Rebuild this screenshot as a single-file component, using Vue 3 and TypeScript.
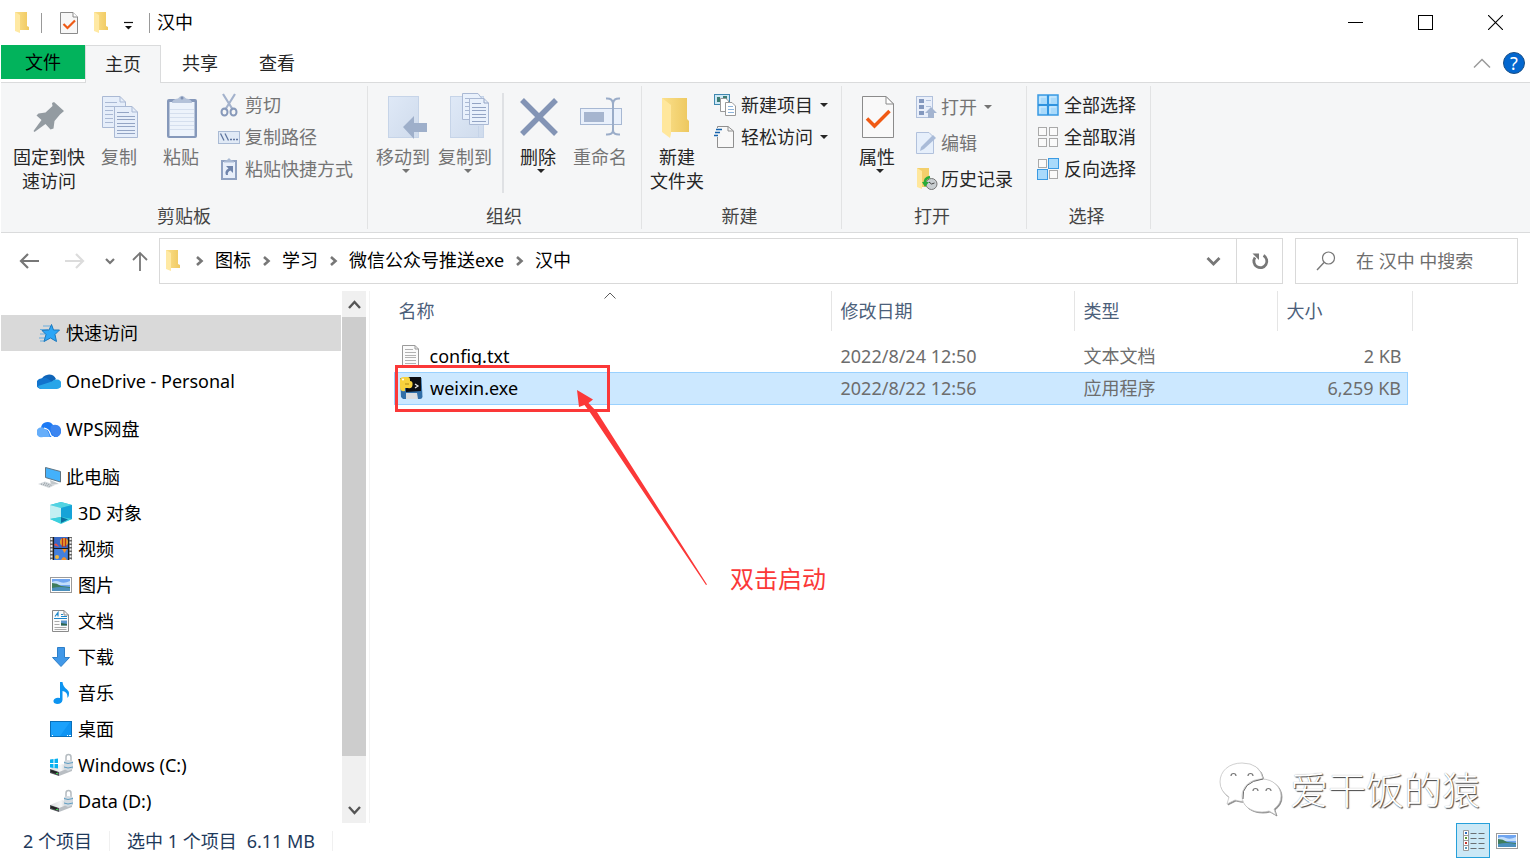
<script setup lang="ts">
import { h, ref } from 'vue'

interface Glyph { w: number; h: number; body: string }

const blueDefs = (id: string) =>
  `<defs><linearGradient id="${id}" x1="0" y1="0" x2="1" y2="1"><stop offset="0" stop-color="#dfe9f7"/><stop offset="1" stop-color="#cfdbec"/></linearGradient></defs>`

const pictureBody = `<rect x="1.500" y="4.500" width="21" height="15" fill="#fff" stroke="#9b9b9b"/>
<rect x="3" y="6" width="18" height="12" fill="#6fa5f0"/><path d="M3 9q4-2 8 0t10-1v4H3z" fill="#c3defa"/>
<path d="M3 10q5 0 9 3l9 1v2H3z" fill="#3f7d5c"/><path d="M3 15q8-2 18 0v3H3z" fill="#4c90bd"/>`

const driveBody = `<defs><linearGradient id="drv" x1="0" y1="0" x2="1" y2="0"><stop offset="0" stop-color="#d6d9dc"/><stop offset=".5" stop-color="#f5f6f7"/><stop offset="1" stop-color="#a4abb1"/></linearGradient></defs>
<path d="M1 16L13 11L23 14V17L9 20L1 19z" fill="url(#drv)"/><path d="M1 16L10 19V23L1 20z" fill="#4e5256"/><path d="M10 19L23 14V18L10 23z" fill="#b9bec3"/>
<path d="M2 18l6 2" stroke="#222" stroke-width="2"/><rect x="7" y="20" width="2" height="1" fill="#35d04a"/>
<path d="M17 8V4q0-2.500 2.500-2.500T22 4v4" fill="none" stroke="#b4bbc0" stroke-width="1.500"/><path d="M15 8l4-1 5 1v8l-5 2-4-2z" fill="#d3dae0"/><path d="M15 9.500l4 1 5-1M15 14l4 1 5-1" fill="none" stroke="#5e9dc2"/>`

const glyphs: Record<string, Glyph> = {
  folder: { w: 16, h: 24, body: `<defs><linearGradient id="fd"><stop offset="0" stop-color="#fbe08c"/><stop offset="1" stop-color="#f0c960"/></linearGradient></defs><path d="M1 1H13V15L15 16V19H1z" fill="url(#fd)"/><path d="M1 1L6 4V22L1 20z" fill="#ffe9a3"/>` },
  checkdoc: { w: 18, h: 24, body: `<path d="M.5 1.500H13L17.500 6V22.500H.5z" fill="#f7f7f7" stroke="#8b8b8b"/><path d="M13 1.500V6H17.500" fill="#fff" stroke="#8b8b8b"/><path d="M3.500 13L7.500 17L15 9.500" fill="none" stroke="#ee5a16" stroke-width="2.200"/>` },
  quick: { w: 9, h: 9, body: `<path d="M0 1.500H9" stroke="#111" stroke-width="1.200"/><path d="M1 5H8L4.500 8.500z" fill="#111"/>` },
  min: { w: 15, h: 15, body: `<path d="M0 7.500H15" stroke="#000"/>` },
  max: { w: 15, h: 15, body: `<rect x=".5" y=".5" width="14" height="14" fill="none" stroke="#000"/>` },
  close: { w: 15, h: 15, body: `<path d="M0 0L15 15M15 0L0 15" stroke="#000" stroke-width="1.100"/>` },
  collapse: { w: 18, h: 12, body: `<path d="M1 10.500L9 2.500L17 10.500" fill="none" stroke="#9a9a9a" stroke-width="1.500"/>` },
  drop: { w: 8, h: 5, body: `<path d="M0 0H8L4 4z" fill="currentColor"/>` },
  pin: { w: 48, h: 48, body: `<path d="M29 9L39 18L35 21.500L29.500 28L28.500 35.500L25.500 36.500L20.500 31L9.500 39L8.500 38L16.500 27L11.500 22.500L13.500 20.500L20.500 19.500L27.500 13L27 10z" fill="#939ba1"/>` },
  copy: { w: 48, h: 48, body: `<g fill="#e6eefa" stroke="#aab9d4"><path d="M7.500 3.500H25L30.500 9V34.500H7.500z"/><path d="M25 3.500V9H30.500M10 9.500h12M10 13.500h17M10 17.500h8M10 21.500h8M10 25.500h8M10 29.500h8" fill="none"/><path d="M19.500 13.500H37L42.500 19V44.500H19.500z"/><path d="M37 13.500V19H42.500" fill="none"/><path d="M22 19.500h12M22 23.500h18M22 26.500h18M22 30.500h18M22 33.500h18M22 37.500h18M22 40.500h18" fill="none" stroke="#93a4c4"/></g>` },
  paste: { w: 48, h: 48, body: `<rect x="10" y="6" width="30" height="39" rx="2" fill="#8598ba"/><rect x="12.500" y="9" width="25" height="34" fill="#edf3fb"/><path d="M13 16.500h24M13 20.500h24M13 24.500h24M13 28.500h24M13 32.500h24M13 36.500h24" stroke="#d5dfee"/><path d="M15 10q0-4 6-4.500Q25 0 29 5.500q6 .5 6 4.500z" fill="#b4c2d9"/><circle cx="25" cy="5" r="1.500" fill="#7f91b2"/>` },
  cut: { w: 22, h: 24, body: `<path d="M5 1L15 17M17 1L7 17" stroke="#a3b2cc" stroke-width="2.200"/><ellipse cx="6.500" cy="19" rx="3" ry="3.500" fill="none" stroke="#8799ba" stroke-width="2"/><ellipse cx="15.500" cy="19" rx="3" ry="3.500" fill="none" stroke="#8799ba" stroke-width="2"/>` },
  path: { w: 22, h: 24, body: `<rect x=".5" y="6.500" width="21" height="12" fill="#e1eaf6" stroke="#a9bad4"/><path d="M2.500 8.500l3.500 7M7 8.500l3.500 7" stroke="#5f759f" stroke-width="1.300"/><path d="M12 14.500h2M15 14.500h2M18 14.500h2" stroke="#5f759f" stroke-width="1.500"/>` },
  shortcut: { w: 22, h: 24, body: `<rect x="4" y="4" width="14" height="18" fill="#e8effa" stroke="#8fa1c1" stroke-width="2"/><path d="M6 5.500V4l3-1 2-2 2 2 3 1v1.500z" fill="#a9b9d3"/><path d="M8 9h7v7l-2.500-2.500Q9 15 10 18H8q-2-4 2.500-6.500z" fill="#6f84ab"/>` },
  moveto: { w: 48, h: 48, body: blueDefs('bm') + `<rect x="9.500" y="3.500" width="30" height="41" fill="url(#bm)" stroke="#c6d4e8"/><path d="M24 34L35 23V30H48V39H35V46z" fill="#9eafca"/>` },
  copyto: { w: 48, h: 48, body: blueDefs('bc') + `<rect x="9.500" y="3.500" width="33" height="41" fill="url(#bc)" stroke="#c6d4e8"/><path d="M37.500 33V44" stroke="#c6d4e8"/><g fill="#e9f1fc" stroke="#aab9d4"><path d="M21.500 .5H37L40.500 5V26.500H21.500z"/><path d="M24 5.500h10M24 9.500h5M24 13.500h5M24 17.500h5M24 21.500h5" fill="none"/><path d="M28.500 5.500H43L47.500 10V31.500H28.500z"/><path d="M43 5.500V10H47.500M31 10.500h9M31 14.500h14M31 17.500h14M31 21.500h14M31 24.500h14M31 28.500h14" fill="none" stroke="#93a4c4"/></g>` },
  remove: { w: 48, h: 48, body: `<path d="M8 7L42 41M42 7L8 41" stroke="#8394b5" stroke-width="5.500"/>` },
  rename: { w: 48, h: 48, body: `<rect x="4.500" y="15.500" width="41" height="16" fill="#e9f0fb" stroke="#a7b8d3"/><rect x="8" y="19" width="20" height="10" fill="#a6b5cf"/><path d="M30 5.500Q37 5 37 11V37Q37 42 30 41.500M44 5.500Q37 5 37 11M37 37Q37 42 44 41.500" fill="none" stroke="#9aacc8" stroke-width="2"/>` },
  bigfolder: { w: 48, h: 48, body: `<defs><linearGradient id="fb"><stop offset="0" stop-color="#fbe08c"/><stop offset="1" stop-color="#edc85f"/></linearGradient></defs><path d="M9 5H34V26L36 28V39H9z" fill="url(#fb)"/><path d="M9 5L18 12V41L17 45L9 39z" fill="#ffe79c"/>` },
  props: { w: 48, h: 48, body: `<path d="M9.500 3.500H33L40.500 11V44.500H9.500z" fill="#f9f9f9" stroke="#8b8b8b"/><path d="M33 3.500V11H40.500z" fill="#fff" stroke="#8b8b8b"/><path d="M14 25.500L21.500 33L36.500 18" fill="none" stroke="#f05a14" stroke-width="3.500"/>` },
  newitem: { w: 22, h: 24, body: `<rect x=".5" y="1.500" width="15" height="10" fill="#cde8f6" stroke="#3f88b0"/><path d="M3 4h3v5H3zM9 3h4v4H9z" fill="#3d7d73"/><path d="M6.500 5.500H12L14.500 8V18.500H6.500z" fill="#fff" stroke="#999"/><path d="M11.500 9.500H18L21.500 13V22.500H11.500z" fill="#fff" stroke="#999"/><path d="M14 13.500h5M14 16.500h6M14 19.500h6" stroke="#8db3da"/>` },
  easy: { w: 22, h: 24, body: `<path d="M3.500 1.500H14L19.500 6V22.500H3.500z" fill="#f8f8f8" stroke="#8f8f8f"/><path d="M14 1.500V6H19.500" fill="none" stroke="#8f8f8f"/><rect x="0" y="3" width="7" height="9" fill="#f5f6f7"/><path d="M2 4.500h6M1 7.500h5M0 10.500h4" stroke="#1763ac" stroke-width="1.300"/>` },
  open: { w: 22, h: 24, body: `<rect x=".5" y="1.500" width="16" height="21" fill="#e9effa" stroke="#b1c1dc"/><path d="M3 4h5v4H3zM3 10h5v4H3zM3 16h5v4H3z" fill="#8398be"/><path d="M10 5.500h5M10 11.500h5" stroke="#b1c1dc"/><path d="M15 12L21 18H18V23H12V18H9z" fill="#a3b4d0"/>` },
  edit: { w: 22, h: 24, body: `<path d="M.5 1.500H13L17.500 6V22.500H.5z" fill="#e6effb" stroke="#b1c1dc"/><path d="M4 20L5 16L17 4L20 7L8 18z" fill="#a9bbd8"/>` },
  history: { w: 22, h: 24, body: `<path d="M1 1H13V20H1z" fill="#f3cf6b"/><path d="M1 1L6 4V22L1 20z" fill="#ffe79c"/><circle cx="15.500" cy="17" r="5.500" fill="#c9ced1" stroke="#777"/><path d="M13 15l2.500 2 3-1" fill="none" stroke="#444"/><path d="M14 10Q8 11 9 17" fill="none" stroke="#28ab3a" stroke-width="2.500"/><path d="M6 15h7l-4 5z" fill="#28ab3a"/>` },
  selall: { w: 22, h: 24, body: `<rect x="1" y="2" width="20" height="20" fill="#a9dafb" stroke="#3a9ae3" stroke-width="1.500"/><path d="M11 2V22M1 12H21" stroke="#2f93df" stroke-width="2"/><path d="M3 10V4h6M13 10V4h6M3 20v-6h6M13 20v-6h6" fill="none" stroke="#d5eefe"/>` },
  selnone: { w: 22, h: 24, body: `<g fill="#fafafa" stroke="#a9a9a9"><rect x="1.500" y="2.500" width="8" height="8"/><rect x="12.500" y="2.500" width="8" height="8"/><rect x="1.500" y="13.500" width="8" height="8"/><rect x="12.500" y="13.500" width="8" height="8"/></g>` },
  selinv: { w: 22, h: 24, body: `<g fill="#fafafa" stroke="#a9a9a9"><rect x="1.500" y="2.500" width="8" height="8"/><rect x="12.500" y="13.500" width="8" height="8"/></g><g fill="#a9dafb" stroke="#3a9ae3"><rect x="11.500" y="1.500" width="10" height="10"/><rect x=".5" y="12.500" width="10" height="10"/></g>` },
  back: { w: 20, h: 18, body: `<path d="M20 9H2M9 2L2 9L9 16" fill="none" stroke="#777" stroke-width="2.200"/>` },
  forward: { w: 20, h: 18, body: `<path d="M0 9H18M11 2L18 9L11 16" fill="none" stroke="#dcdcdc" stroke-width="2.200"/>` },
  recent: { w: 10, h: 8, body: `<path d="M1 2L5 6L9 2" fill="none" stroke="#777" stroke-width="2.200"/>` },
  up: { w: 16, h: 20, body: `<path d="M8 20V2M1 9L8 2L15 9" fill="none" stroke="#777" stroke-width="1.800"/>` },
  crumb: { w: 9, h: 12, body: `<path d="M2 2L6.500 6L2 10" fill="none" stroke="#777" stroke-width="2.600"/>` },
  expand: { w: 15, h: 12, body: `<path d="M1.500 3L7.500 9L13.500 3" fill="none" stroke="#777" stroke-width="2.800"/>` },
  refresh: { w: 18, h: 18, body: `<path d="M12.500 3.500A6.500 6.500 0 1 1 4 5.500" fill="none" stroke="#777" stroke-width="2.800"/><path d="M1.500 1.500H8V8z" fill="#777"/>` },
  search: { w: 20, h: 20, body: `<circle cx="12.500" cy="7" r="6" fill="none" stroke="#777" stroke-width="1.200"/><path d="M8 11.500L1 19" stroke="#777" stroke-width="1.400"/>` },
  star: { w: 24, h: 24, body: `<path d="M6 5h7M3 8.500h8M3 13h6M2 17h6M3 20h4" stroke="#6aaede" stroke-width="1.200"/><path d="M14.500 3.500L16.500 9H22.500L18 13.500L19.500 20.500L13.500 17L7 20.500L9 13.500L5 9.500L12 9z" fill="#2ba6f6" stroke="#1c78bd"/>` },
  onedrive: { w: 24, h: 24, body: `<path d="M4 12A8 8 0 0 1 19 10L13 15z" fill="#0f64b8"/><path d="M5 20A5 5 0 0 1 4 9.500Q8 8 11 10L17 14L8 20z" fill="#1173cd"/><path d="M15 12.500Q17 10 20 10.500A4.700 4.700 0 0 1 20 20H5Q2 20 1 17z" fill="#28a5e9"/>` },
  wps: { w: 24, h: 24, body: `<path d="M4 11A6.500 6.500 0 0 1 16 8Q15 13 21 20H9z" fill="#1b7af5"/><path d="M16 8A6 6 0 0 1 20 20H18Q12 15 14 9z" fill="#3c85f0"/><path d="M6 20A5 5 0 1 1 7 11Q11 12 13 20z" fill="#66aefa"/><path d="M7 11Q12 12 13 16T17 20" fill="none" stroke="#fff" stroke-width="1.200"/>` },
  pc: { w: 24, h: 24, body: `<path d="M8.500 2.500L23.500 6.500V17L8.500 12.500z" fill="#44b1fa" stroke="#5f7482"/><path d="M13 15L18 17L22 19L14 20z" fill="#c1c7cb"/><path d="M1 19L8 16.500L18 20L12 23z" fill="#d3d8dc"/><path d="M4 19l9 2.500M7 18l8 2.500" stroke="#8f989e" stroke-dasharray="1 1"/>` },
  cube: { w: 24, h: 24, body: `<path d="M12 1L23 4V18L12 22L1 18V4z" fill="#2cc0d8"/><path d="M1 4L12 1L23 4L12 7z" fill="#52d3e2"/><path d="M1 4L12 7V16L1 18z" fill="#c3f0f3"/><path d="M12 7L23 4V18L12 16z" fill="#16a3d8"/><path d="M12 16L23 18L12 23L1 18z" fill="#3bd0de"/><path d="M12 16L19 18.500L12 22z" fill="#0a6fa0"/>` },
  video: { w: 24, h: 24, body: `<rect x="1" y="0" width="22" height="23" fill="#666"/><path d="M2.500 1V23M21.500 1V23" stroke="#f2f2f2" stroke-width="2" stroke-dasharray="2 1.500"/><rect x="4.500" y="0" width="15" height="11" fill="#3969c5"/><rect x="4.500" y="12" width="15" height="11" fill="#4480dc"/><path d="M4.500 11V0M19.500 0V23M4.500 11V23M4 11.500H20" stroke="#1b1b1b" stroke-width="1.200"/><circle cx="15" cy="5" r="4" fill="#e4a32b"/><path d="M13.500 1v9M16.500 1v9" stroke="#bd3020" stroke-width="1.300"/><path d="M5 8q2-4 5 2z" fill="#f04f42"/><path d="M13 12h5l-2.500 4zM12 23q3-6 6 0z" fill="#f1912e"/><circle cx="8" cy="20" r="2" fill="#f5b93c"/>` },
  picture: { w: 24, h: 24, body: pictureBody },
  doc: { w: 24, h: 24, body: `<path d="M3.500 1.500H15L19.500 6V22.500H3.500z" fill="#fbfbfb" stroke="#8b8b8b"/><path d="M15 1.500V6H19.500" fill="none" stroke="#8b8b8b"/><path d="M6 7.500l3-4v4M12 5.500h2M12 7.500h6M5 9.500h13" fill="none" stroke="#1d86c9" stroke-width="1.200"/><path d="M5.500 12.500h5M5.500 15.500h5M5.500 18.500h12M5.500 20.500h12" stroke="#aaa"/><rect x="12" y="11.500" width="6" height="5" fill="#5a95cc"/><path d="M12 14l6 1v1.500h-6z" fill="#2f664c"/>` },
  download: { w: 24, h: 24, body: `<path d="M8.500 2.500H15.500V12.500H20.500L12 21.500L3.500 12.500H8.500z" fill="#4198e8" stroke="#2d7fc9"/>` },
  music: { w: 24, h: 24, body: `<path d="M11 1h2.500Q14 6 18 8.500Q22 12 18.500 17Q19 11 13.500 10V19Q13 23 8 23Q4 22.500 4.500 19.500Q6 16 11 17z" fill="#0d94f0"/>` },
  desktop: { w: 24, h: 24, body: `<rect x="1.500" y="4.500" width="21" height="15" fill="#1ba1fb" stroke="#0a6fb9"/><path d="M11 19L21 5H22V19z" fill="#0e94f3"/><path d="M3 18.500h1M18 18.500h1M20 18.500h2" stroke="#fff"/>` },
  winDrive: { w: 24, h: 24, body: driveBody + `<path d="M1 6.500L4.500 6V10H1zM5.500 6L9 5.500V10H5.500zM1 11H4.500V15L1 14.500zM5.500 11H9V15.500L5.500 15z" fill="#06b0f0"/>` },
  drive: { w: 24, h: 24, body: driveBody },
  text: { w: 24, h: 24, body: `<path d="M3.500 1.500H16L19.500 5V22.500H3.500z" fill="#fbfbfb" stroke="#9a9a9a"/><path d="M16 1.500V5H19.500" fill="none" stroke="#9a9a9a"/><path d="M6 5.500h8M6 8.500h11M6 11.500h11M6 13.500h11M6 16.500h11M6 19.500h11" stroke="#b2b2b2"/>` },
  exe: { w: 24, h: 24, body: `<path d="M1 2H22.500L23.500 21Q23 23 21 23H4L2 21z" fill="#316fa8"/><path d="M6 1H22V15L7 16z" fill="#0c0e13"/><path d="M16 8l3 2-3 2" fill="none" stroke="#e5e5e5" stroke-width="1.300"/><path d="M1 4Q1 1 5 1H9Q11 1 11 4V5Q14 5 13.500 9T9 12H6V15Q1 16 1 11z" fill="#f7d23d"/><circle cx="4" cy="3.500" r="1" fill="#fff"/><path d="M6 8h4" stroke="#b28c16"/><path d="M7 17H18L19 23H7z" fill="#d9dcdf"/>` },
  sort: { w: 12, h: 7, body: `<path d="M.5 6.500L6 1L11.500 6.500" fill="none" stroke="#5c5c5c"/>` },
  scrollUp: { w: 13, h: 9, body: `<path d="M1 8L6.500 2L12 8" fill="none" stroke="#555" stroke-width="2.400"/>` },
  scrollDown: { w: 13, h: 9, body: `<path d="M1 1L6.500 7L12 1" fill="none" stroke="#555" stroke-width="2.400"/>` },
  details: { w: 24, h: 24, body: `<path d="M2.500 1.500H7.500V21.500H2.500zM2.500 6.500H7.500M2.500 11.500H7.500M2.500 16.500H7.500" fill="#fff" stroke="#999"/><path d="M9.500 4.500h6M17.500 4.500h6M9.500 9.500h6M17.500 9.500h6M9.500 14.500h6M17.500 14.500h6M9.500 19.500h6M17.500 19.500h6" stroke="#6a6f73"/><rect x="4" y="3" width="2" height="2" fill="#2d6fc0"/><rect x="4" y="8" width="2" height="2" fill="#5c9a36"/><rect x="4" y="13" width="2" height="2" fill="#c8372d"/><rect x="4" y="18" width="2" height="2" fill="#5a9dbd"/>` },
  bubbles: { w: 64, h: 56, body: `<g fill="#fff" stroke="#c4c4c4" stroke-width=".8"><path d="M23 2C10 2 1 10 1 21q0 9 9 15l-2 7 8-4q6 2 10 1Q21 20 44 18Q41 2 23 2z"/><path d="M43 18C31 18 23 26 23 35C23 45 32 51 43 51q4 0 7-1l7 4-2-6q7-5 7-13C62 26 54 18 43 18z"/></g><path d="M24 38Q22 21 44 18" fill="none" stroke="#666"/><g fill="none" stroke="#777" stroke-width="1.200"><path d="M12 15a2.500 2.500 0 1 1 5 0M29 15a2.500 2.500 0 1 1 5 0M34 30a2.500 2.500 0 1 1 5 0M47 30a2.500 2.500 0 1 1 5 0"/></g>` },
}

const Icon = (props: { name: string }) => {
  const g = glyphs[props.name]
  return h('svg', {
    viewBox: `0 0 ${g.w} ${g.h}`, width: g.w, height: g.h,
    'aria-hidden': 'true', innerHTML: g.body,
  })
}
Icon.props = ['name']

interface Cmd { icon: string; lines: string[]; off?: boolean; drop?: boolean; sep?: boolean }
interface Group { name: string; cls: string; big: Cmd[]; small: Cmd[] }

const groups: Group[] = [
  { name: '剪贴板', cls: 'g-clip',
    big: [
      { icon: 'pin', lines: ['固定到快', '速访问'] },
      { icon: 'copy', lines: ['复制'], off: true },
      { icon: 'paste', lines: ['粘贴'], off: true },
    ],
    small: [
      { icon: 'cut', lines: ['剪切'], off: true },
      { icon: 'path', lines: ['复制路径'], off: true },
      { icon: 'shortcut', lines: ['粘贴快捷方式'], off: true },
    ] },
  { name: '组织', cls: 'g-org',
    big: [
      { icon: 'moveto', lines: ['移动到'], off: true, drop: true },
      { icon: 'copyto', lines: ['复制到'], off: true, drop: true },
      { icon: 'remove', lines: ['删除'], drop: true, sep: true },
      { icon: 'rename', lines: ['重命名'], off: true },
    ],
    small: [] },
  { name: '新建', cls: 'g-new',
    big: [{ icon: 'bigfolder', lines: ['新建', '文件夹'] }],
    small: [
      { icon: 'newitem', lines: ['新建项目'], drop: true },
      { icon: 'easy', lines: ['轻松访问'], drop: true },
    ] },
  { name: '打开', cls: 'g-open',
    big: [{ icon: 'props', lines: ['属性'], drop: true }],
    small: [
      { icon: 'open', lines: ['打开'], off: true, drop: true },
      { icon: 'edit', lines: ['编辑'], off: true },
      { icon: 'history', lines: ['历史记录'] },
    ] },
  { name: '选择', cls: 'g-select',
    big: [],
    small: [
      { icon: 'selall', lines: ['全部选择'] },
      { icon: 'selnone', lines: ['全部取消'] },
      { icon: 'selinv', lines: ['反向选择'] },
    ] },
]

const tabs = ['主页', '共享', '查看']
const crumbs = ['图标', '学习', '微信公众号推送exe', '汉中']
const query = ref('')

const tree = [
  { icon: 'star', label: '快速访问', root: true, active: true },
  { icon: 'onedrive', label: 'OneDrive - Personal', root: true },
  { icon: 'wps', label: 'WPS网盘', root: true },
  { icon: 'pc', label: '此电脑', root: true },
  { icon: 'cube', label: '3D 对象' },
  { icon: 'video', label: '视频' },
  { icon: 'picture', label: '图片' },
  { icon: 'doc', label: '文档' },
  { icon: 'download', label: '下载' },
  { icon: 'music', label: '音乐' },
  { icon: 'desktop', label: '桌面' },
  { icon: 'winDrive', label: 'Windows (C:)' },
  { icon: 'drive', label: 'Data (D:)' },
]

const files = [
  { icon: 'text', name: 'config.txt', date: '2022/8/24 12:50', kind: '文本文档', size: '2 KB', on: false },
  { icon: 'exe', name: 'weixin.exe', date: '2022/8/22 12:56', kind: '应用程序', size: '6,259 KB', on: true },
]
</script>

<template>
  <div class="window">
    <header class="titlebar">
      <Icon name="folder" class="app-icon" />
      <span class="bar"></span>
      <button class="plain qa" aria-label="属性"><Icon name="checkdoc" /></button>
      <button class="plain qa" aria-label="新建文件夹"><Icon name="folder" /></button>
      <button class="plain qa-menu" aria-label="自定义快速访问工具栏"><Icon name="quick" /></button>
      <span class="bar"></span>
      <h1>汉中</h1>
      <div class="controls">
        <button class="plain" aria-label="最小化"><Icon name="min" /></button>
        <button class="plain" aria-label="最大化"><Icon name="max" /></button>
        <button class="plain" aria-label="关闭"><Icon name="close" /></button>
      </div>
    </header>

    <nav class="tabs">
      <button class="plain file-tab">文件</button>
      <button v-for="(t, i) in tabs" :key="t" class="plain tab" :class="{ current: i === 0 }">{{ t }}</button>
      <div class="tab-tools">
        <button class="plain" aria-label="折叠功能区"><Icon name="collapse" /></button>
        <button class="plain help" aria-label="帮助">?</button>
      </div>
    </nav>

    <div class="ribbon">
      <section v-for="g in groups" :key="g.name" class="group" :class="g.cls">
        <div class="cmds">
          <template v-for="c in g.big" :key="c.icon">
            <span v-if="c.sep" class="cmd-sep"></span>
            <button class="plain big" :class="{ off: c.off }">
              <Icon :name="c.icon" />
              <span v-for="l in c.lines" :key="l" class="line">{{ l }}</span>
              <Icon v-if="c.drop" name="drop" class="big-drop" />
            </button>
          </template>
          <div v-if="g.small.length" class="stack">
            <button v-for="c in g.small" :key="c.icon" class="plain small" :class="{ off: c.off }">
              <Icon :name="c.icon" /><span>{{ c.lines[0] }}</span><Icon v-if="c.drop" name="drop" class="side-drop" />
            </button>
          </div>
        </div>
        <h2>{{ g.name }}</h2>
      </section>
    </div>

    <div class="navrow">
      <button class="plain nav-wide" aria-label="后退"><Icon name="back" /></button>
      <button class="plain nav-wide" aria-label="前进"><Icon name="forward" /></button>
      <button class="plain nav-slim" aria-label="最近位置"><Icon name="recent" /></button>
      <button class="plain nav-up" aria-label="上移"><Icon name="up" /></button>
      <div class="address">
        <Icon name="folder" class="addr-icon" />
        <template v-for="c in crumbs" :key="c">
          <Icon name="crumb" class="crumb-sep" />
          <button class="plain crumb">{{ c }}</button>
        </template>
        <button class="plain addr-expand" aria-label="展开"><Icon name="expand" /></button>
        <button class="plain addr-refresh" aria-label="刷新"><Icon name="refresh" /></button>
      </div>
      <label class="search">
        <Icon name="search" />
        <input v-model="query" type="search" placeholder="在 汉中 中搜索" aria-label="在 汉中 中搜索" />
      </label>
    </div>

    <div class="body">
      <aside class="side">
        <ul class="tree">
          <li v-for="n in tree" :key="n.label" :class="{ root: n.root }">
            <a href="#" :class="{ active: n.active }"><Icon :name="n.icon" /><span>{{ n.label }}</span></a>
          </li>
        </ul>
        <div class="scroll">
          <button class="plain" aria-label="向上滚动"><Icon name="scrollUp" /></button>
          <div class="track"><div class="thumb"></div></div>
          <button class="plain" aria-label="向下滚动"><Icon name="scrollDown" /></button>
        </div>
      </aside>

      <main class="files">
        <table>
          <colgroup><col class="c-name" /><col class="c-date" /><col class="c-kind" /><col class="c-size" /></colgroup>
          <thead>
            <tr>
              <th scope="col"><div>名称<Icon name="sort" class="sort" /></div></th>
              <th scope="col"><div>修改日期</div></th>
              <th scope="col"><div>类型</div></th>
              <th scope="col"><div>大小</div></th>
            </tr>
          </thead>
          <tbody>
            <tr v-for="f in files" :key="f.name" :class="{ on: f.on }">
              <td class="name"><div><Icon :name="f.icon" />{{ f.name }}</div></td>
              <td>{{ f.date }}</td>
              <td>{{ f.kind }}</td>
              <td class="size">{{ f.size }}</td>
            </tr>
          </tbody>
        </table>

        <div class="mark-box"></div>
        <svg class="mark-arrow" viewBox="0 0 130 196" width="130" height="196" aria-hidden="true">
          <path d="M0 0L16 9.500L11.500 13L20 22L130 194.500L129 195L12 21L7.500 15L2 17z" fill="#fb3838" />
        </svg>
        <p class="mark-text">双击启动</p>
        <div class="brand"><Icon name="bubbles" /><span>爱干饭的猿</span></div>
      </main>
    </div>

    <footer class="status">
      <span class="cell">2 个项目</span>
      <span class="cell"><span>选中 1 个项目</span><span>6.11 MB</span></span>
      <div class="views">
        <button class="plain view on" aria-label="详细信息"><Icon name="details" /></button>
        <button class="plain view" aria-label="大图标"><Icon name="picture" /></button>
      </div>
    </footer>
  </div>
</template>

<style>
html, body { background: #fff; }
</style>

<style scoped>
.window {
  display: flex; flex-direction: column; box-sizing: border-box; min-height: 100vh;
  padding: 0 1px; background: #fff; color: #000; overflow: hidden;
  font: 18px/24px "Noto Sans", "Noto Sans CJK SC", sans-serif;
}
.window *, .window *::after { box-sizing: border-box; }
svg { display: block; flex: none; }
.plain {
  display: flex; align-items: center; justify-content: center;
  margin: 0; padding: 0; border: 0; background: none; color: inherit; font: inherit; white-space: nowrap;
}
h1, h2, p, ul { margin: 0; padding: 0; font: inherit; }

.titlebar { display: flex; align-items: center; height: 45px; padding-left: 13px; }
.bar { width: 1px; height: 20px; background: #999; }
.app-icon { margin-right: 11px; }
.qa { margin-left: 15px; }
.bar + .qa { margin-left: 18px; }
.qa + .qa-menu { margin: 6px 16px 0 15px; }
h1 { margin-left: 7px; padding-bottom: 2px; }
.controls { display: flex; align-self: stretch; margin-left: auto; }
.controls .plain { width: 70px; }

.tabs { display: flex; align-items: flex-start; height: 37px; }
.file-tab { width: 84px; height: 34px; background: #02b35c; }
.tab { height: 37px; padding: 0 20px 2px; margin-left: 1px; color: #262626; }
.tab.current {
  position: relative; z-index: 1; height: 38px; margin-left: 0; padding: 0 19px 2px;
  border: 1px solid #dadbdc; border-bottom: 0; background: #f5f6f7;
}
.tab-tools { display: flex; align-items: center; gap: 12px; height: 36px; margin-left: auto; padding-right: 5px; }
.help {
  width: 22px; height: 22px; border-radius: 50%; border: 1px solid #1a4f86;
  background: #0367cf; color: #fff; line-height: 20px;
}

.ribbon {
  display: flex; height: 151px; border-top: 1px solid #dadbdc; border-bottom: 1px solid #dadbdc;
  background: #f5f6f7; color: #262626;
}
.group { position: relative; display: flex; flex-direction: column; padding: 6px 4px 0; }
.group::after { content: ""; position: absolute; top: 3px; right: 0; bottom: 3px; width: 1px; background: #e2e3e4; }
.g-clip { padding: 6px 15px 0 9px; }
.g-org { padding-right: 11px; }
.g-new { padding-right: 14px; }
.g-open { padding-right: 14px; }
.g-select { padding: 6px 15px 0 10px; }
.cmds { display: flex; height: 115px; }
h2 { padding-left: 5px; text-align: center; color: #444; }
.g-select h2 { padding: 0; }
.big { flex-direction: column; justify-content: flex-start; width: 62px; padding-top: 4px; }
.big > svg:first-child { margin-bottom: 4px; }
.g-clip .big:first-child { width: 78px; }
.big-drop { margin-left: 5px; }
.off { color: #747474; }
.cmd-sep { width: 2px; height: 100px; margin: 4px 3px 0 6px; background: #dfe1e4; }
.stack { display: flex; flex-direction: column; align-items: flex-start; margin-left: 6px; }
.g-select .stack { margin-left: 0; }
.small { height: 32px; gap: 5px; }
.g-open .small { height: 36px; gap: 3px; }
.g-open .stack { margin-left: 8px; }
.side-drop { margin-left: 2px; }
.g-open .side-drop { margin-left: 4px; }

.navrow { display: flex; align-items: center; padding: 5px 12px 7px 5px; }
.nav-wide { width: 46px; height: 46px; }
.nav-slim { width: 24px; height: 46px; }
.nav-up { width: 37px; height: 46px; padding-right: 2px; }
.address { display: flex; align-items: center; flex: 1; height: 46px; border: 1px solid #d9d9d9; }
.addr-icon { margin: 0 3px 0 5px; }
.crumb-sep { margin: 0 11px; }
.crumb { padding-bottom: 2px; }
.addr-expand { width: 46px; height: 44px; margin-left: auto; }
.addr-refresh { width: 46px; height: 44px; border-left: 1px solid #d9d9d9; }
.search {
  display: flex; align-items: center; gap: 20px; width: 223px; height: 46px;
  margin-left: 12px; padding-left: 20px; border: 1px solid #d9d9d9;
}
.search input {
  flex: 1; min-width: 0; padding: 0; border: 0; outline: 0; background: none; font: inherit; color: #333;
}
.search input::placeholder { color: #6d6d6d; opacity: 1; }

.body { display: flex; flex: 1; }
.side { display: flex; width: 369px; padding-right: 3px; border-right: 1px solid #f3f3f3; }
.tree { flex: 1; padding: 24px 1px 4px 0; list-style: none; }
.tree a {
  display: flex; align-items: center; gap: 5px; height: 36px; padding-left: 48px; color: #000; text-decoration: none;
}
.tree .root a { padding-left: 36px; }
.tree .root + .root { margin-top: 12px; }
.tree .active { background: #d9d9d9; }
.scroll { display: flex; flex-direction: column; width: 24px; background: #f0f0f0; }
.scroll .plain { height: 26px; }
.track { flex: 1; }
.thumb { height: 91.5%; background: #cdcdcd; }

.files { position: relative; flex: 1; padding-left: 24px; }
table { width: 1013px; table-layout: fixed; border-collapse: collapse; }
.c-name { width: 437px; }
.c-date { width: 243px; }
.c-kind { width: 203px; }
.c-size { width: 130px; }
th { height: 49px; padding: 0; vertical-align: top; text-align: left; font-weight: 400; color: #4c607a; }
th div { position: relative; height: 40px; padding-left: 9px; border-right: 1px solid #e5e5e5; line-height: 40px; }
th:first-child div { padding-left: 4px; }
th:last-child div { margin-right: -5px; }
.sort { position: absolute; top: 1px; left: 50%; margin-left: -9px; }
td { height: 32px; padding: 0 0 0 9px; color: #6d6d6d; }
td.name { padding-left: 4px; color: #000; }
td.name div { display: flex; align-items: center; gap: 7px; }
td.size { padding: 0 6px 0 0; text-align: right; }
.on td { border: solid #99d1ff; border-width: 1px 0; background: #cce8ff; }
.on td:first-child { border-left-width: 1px; }
.on td:last-child { border-right-width: 1px; }

.mark-box { position: absolute; left: 25px; top: 74px; width: 215px; height: 47px; border: 3px solid #fb3838; }
.mark-arrow { position: absolute; left: 207px; top: 99px; }
.mark-text { position: absolute; left: 360px; top: 272px; font-size: 24px; line-height: 32px; color: #fb3838; }
.brand {
  position: absolute; right: 50px; bottom: 6px; display: flex; align-items: center; gap: 7px;
  font-size: 38px; line-height: 56px; font-weight: 300; color: #fff; text-shadow: 1px 1px 1px #444, 0 0 1px #999;
}
.brand svg { filter: drop-shadow(1px 1px 0 #888); }

.status { display: flex; align-items: center; height: 36px; padding: 0 0 1px 22px; color: #1e395b; }
.cell { display: flex; gap: 10px; padding-right: 17px; margin-right: 17px; border-right: 1px solid #f0f0f0; line-height: 20px; }
.views { display: flex; margin-left: auto; padding-right: 6px; }
.view { width: 34px; height: 35px; }
.view.on { border: 1px solid #26a0da; background: #cbe8f6; }
</style>
